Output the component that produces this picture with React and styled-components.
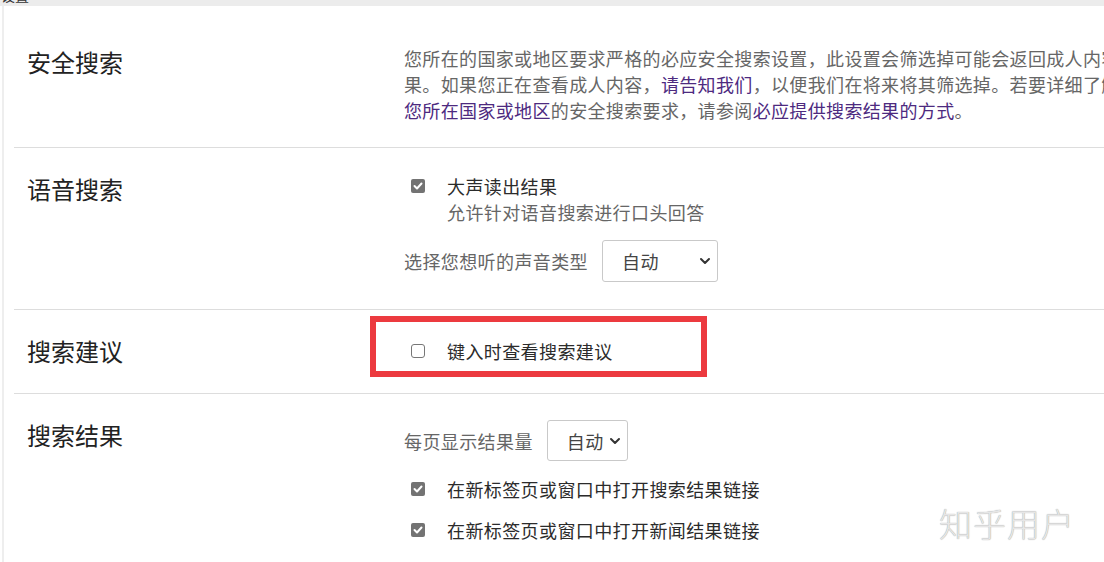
import React from 'react';
import styled, { createGlobalStyle } from 'styled-components';

const GlobalStyle = createGlobalStyle`
  html, body {
    margin: 0;
    padding: 0;
    background: #fff;
    overflow: hidden;
  }
  body {
    font-family: 'Noto Sans CJK SC', 'Noto Sans', sans-serif;
    color: #333;
  }
`;

const Page = styled.div`
  position: relative;
  width: 1104px;
  height: 562px;
  overflow: hidden;
`;

const TopBar = styled.div`
  height: 6px;
  background: #ececec;
  display: flex;
  align-items: flex-end;
  overflow: hidden;
  padding-left: 1px;
`;

const Crumb = styled.span`
  font-size: 14px;
  line-height: 14px;
  color: #333;
  margin-bottom: 4px;
`;

const Panel = styled.div`
  margin-left: 2px;
  border-left: 2px solid #eeeeee;
  padding-top: 14px;
  height: 100%;
`;

const Section = styled.section`
  margin-left: 10px;
  border-top: ${p => (p.$first ? 'none' : '1px solid #dddddd')};
  display: grid;
  grid-template-columns: 377px 1fr;
  padding: ${p => p.$pt}px 0 ${p => p.$pb}px 13px;
`;

const Title = styled.h2`
  margin: 0;
  font-size: 24px;
  line-height: 32px;
  font-weight: 400;
  color: #222;
`;

const Cell = styled.div`
  position: relative;
  padding-top: ${p => p.$pad || 0}px;
  display: flex;
  flex-direction: column;
  gap: ${p => p.$gap || 0}px;
`;

const Description = styled.p`
  margin: -1px 0 0;
  font-size: 18px;
  line-height: 26px;
  letter-spacing: 0.35px;
  color: #666;
  white-space: nowrap;
`;

const Link = styled.a`
  color: #4d2a7f;
  text-decoration: none;
`;

const CheckRow = styled.div`
  display: flex;
  align-items: flex-start;
  font-size: 18px;
  line-height: 26px;
  letter-spacing: 0.4px;
`;

const Box = styled.span`
  flex: none;
  box-sizing: border-box;
  width: 14px;
  height: 14px;
  margin: 6px 22px 0 7px;
  border-radius: ${p => (p.$checked ? '2px' : '3px')};
  background: ${p => (p.$checked ? '#737373' : '#fff')};
  border: ${p => (p.$checked ? 'none' : '1px solid #777')};
  display: flex;
  align-items: center;
  justify-content: center;
`;

const LabelText = styled.div`
  display: flex;
  flex-direction: column;
`;

const Main = styled.span`
  color: #2b2b2b;
`;

const Sub = styled.span`
  color: #666;
`;

const SelectRow = styled.div`
  display: flex;
  align-items: center;
  gap: 14px;
  margin-top: ${p => p.$mt || 0}px;
  font-size: 18px;
  line-height: 26px;
  letter-spacing: 0.4px;
  color: #666;
`;

const Dropdown = styled.div`
  box-sizing: border-box;
  width: ${p => p.$w}px;
  height: ${p => p.$h}px;
  border: 1px solid #c9c9c9;
  border-radius: 3px;
  display: flex;
  align-items: center;
  padding: 0 6px 0 19px;
  color: #444;
  font-size: 18px;
`;

const Chevron = styled.svg`
  margin-left: auto;
  flex: none;
`;

const Highlight = styled.div`
  position: absolute;
  top: -19px;
  left: -34px;
  width: 337px;
  height: 61px;
  box-sizing: border-box;
  border: 6px solid #ec3a3f;
  pointer-events: none;
`;

const Watermark = styled.div`
  position: absolute;
  left: 939px;
  top: 501px;
  font-size: 33px;
  line-height: 44px;
  letter-spacing: 1px;
  font-weight: 300;
  color: #e6e6e6;
  text-shadow: 0 0 1px #8f8f8f;
`;

const Check = ({ checked }) => (
  <Box $checked={checked}>
    {checked && (
      <svg width="10" height="8" viewBox="0 0 10 8">
        <polyline points="1.5,4 4,6.5 8.5,1.5" fill="none" stroke="#fff" strokeWidth="2" strokeLinecap="round" strokeLinejoin="round" />
      </svg>
    )}
  </Box>
);

const Select = ({ w, h }) => (
  <Dropdown $w={w} $h={h}>
    自动
    <Chevron width="12" height="8" viewBox="0 0 12 8">
      <polyline points="2,2 6,6 10,2" fill="none" stroke="#333" strokeWidth="2" strokeLinecap="round" strokeLinejoin="round" />
    </Chevron>
  </Dropdown>
);

const App = () => (
  <Page>
    <GlobalStyle />
    <TopBar>
      <Crumb>设置 &gt;</Crumb>
    </TopBar>
    <Panel>
      <Section $first $pt={26} $pb={24}>
        <Title>安全搜索</Title>
        <Cell>
          <Description>
            您所在的国家或地区要求严格的必应安全搜索设置，此设置会筛选掉可能会返回成人内容的搜索结
            <br />
            果。如果您正在查看成人内容，<Link href="#">请告知我们</Link>，以便我们在将来将其筛选掉。若要详细了解有关
            <br />
            <Link href="#">您所在国家或地区</Link>的安全搜索要求，请参阅<Link href="#">必应提供搜索结果的方式</Link>。
          </Description>
        </Cell>
      </Section>

      <Section $pt={25} $pb={27}>
        <Title>语音搜索</Title>
        <Cell>
          <CheckRow>
            <Check checked />
            <LabelText>
              <Main>大声读出结果</Main>
              <Sub>允许针对语音搜索进行口头回答</Sub>
            </LabelText>
          </CheckRow>
          <SelectRow $mt={15}>
            选择您想听的声音类型
            <Select w={116} h={42} />
          </SelectRow>
        </Cell>
      </Section>

      <Section $pt={25} $pb={26}>
        <Title>搜索建议</Title>
        <Cell $pad={3}>
          <CheckRow>
            <Check />
            <Main>键入时查看搜索建议</Main>
          </CheckRow>
          <Highlight />
        </Cell>
      </Section>

      <Section $pt={25} $pb={20}>
        <Title>搜索结果</Title>
        <Cell $gap={15}>
          <SelectRow $mt={1}>
            每页显示结果量
            <Select w={81} h={41} />
          </SelectRow>
          <CheckRow>
            <Check checked />
            <Main>在新标签页或窗口中打开搜索结果链接</Main>
          </CheckRow>
          <CheckRow>
            <Check checked />
            <Main>在新标签页或窗口中打开新闻结果链接</Main>
          </CheckRow>
        </Cell>
      </Section>
    </Panel>
    <Watermark>知乎用户</Watermark>
  </Page>
);

export default App;
